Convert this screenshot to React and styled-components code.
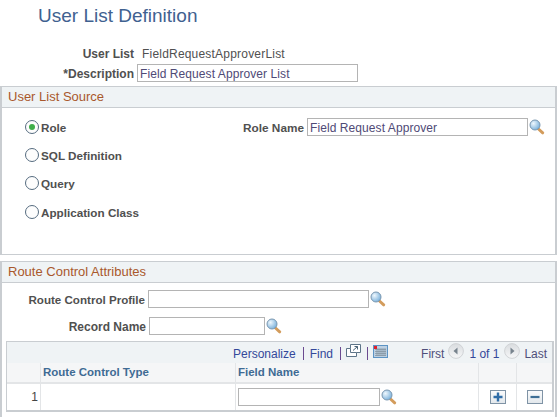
import React from 'react';
import styled, { createGlobalStyle } from 'styled-components';

const Global = createGlobalStyle`
  html, body {
    margin: 0;
    padding: 0;
    background: #fff;
  }
  body {
    font-family: "Liberation Sans", Arial, sans-serif;
    font-size: 12px;
    color: #444;
    overflow: hidden;
  }
`;

const Page = styled.div`
  width: 557px;
  height: 417px;
  overflow: hidden;
  padding-top: 6px;
  box-sizing: border-box;
`;

const Title = styled.h1`
  margin: 0 0 0 38px;
  height: 20px;
  line-height: 20px;
  font-size: 19px;
  font-weight: normal;
  color: #3f6190;
`;

const Form = styled.div`
  margin-top: 18px;
  display: grid;
  grid-template-columns: 134px auto;
  grid-auto-rows: 18px;
  row-gap: 2px;
  align-items: center;
`;

const Label = styled.label`
  padding-top: 1px;
  font-weight: bold;
  font-size: ${(p) => p.$size ?? 12}px;
  color: #505050;
  white-space: nowrap;
  text-align: right;
`;

const Value = styled.span`
  margin-left: 8px;
  padding-top: 1px;
  letter-spacing: 0.2px;
  color: #505050;
`;

const Input = styled.div`
  box-sizing: border-box;
  width: ${(p) => p.$w}px;
  height: 18px;
  margin-left: ${(p) => p.$ml ?? 3}px;
  padding-left: 2px;
  line-height: 18px;
  letter-spacing: 0.08px;
  border: 1px solid #b4b4b4;
  background: #fff;
  color: #4f4a76;
  white-space: nowrap;
  flex: none;
`;

const Section = styled.section`
  box-sizing: border-box;
  margin-top: ${(p) => p.$mt}px;
  width: 557px;
  height: ${(p) => p.$h}px;
  border: 1px solid #c9cdd1;
  border-width: 1px 2px 1px 2px;
`;

const SectionHead = styled.div`
  box-sizing: border-box;
  height: 21px;
  padding-left: 6px;
  line-height: 19px;
  background: #eff3f5;
  border-bottom: 1px solid #c9cdd1;
  color: #a9582c;
  font-size: 13px;
`;

const SourceBody = styled.div`
  display: flex;
  justify-content: space-between;
  padding: 10px 10px 0 23px;
`;

const RadioList = styled.div`
  display: flex;
  flex-direction: column;
  gap: 10px;
`;

const RadioRow = styled.div`
  display: flex;
  align-items: center;
  gap: 2px;
  height: 18px;
  margin-top: ${(p) => p.$mt ?? 0}px;
  font-weight: bold;
  font-size: 11.7px;
  color: #505050;
`;

const Radio = styled.span`
  box-sizing: border-box;
  width: 14px;
  height: 14px;
  border-radius: 50%;
  border: 1px solid #566c80;
  background: #fdfdfd;
  display: flex;
  align-items: center;
  justify-content: center;
  &::after {
    content: "";
    display: ${(p) => (p.$on ? 'block' : 'none')};
    width: 6px;
    height: 6px;
    border-radius: 50%;
    background: #3fae49;
  }
`;

const Row = styled.div`
  display: flex;
  align-items: center;
  height: 18px;
  margin-top: ${(p) => p.$mt ?? 0}px;
`;

const RouteLabel = styled(Label)`
  width: ${(p) => p.$w}px;
  flex: none;
`;

const RouteBody = styled.div`
  padding-top: 7px;
`;

const Grid = styled.div`
  box-sizing: border-box;
  margin: 6px 0 0 4px;
  width: 548px;
  height: 71px;
  border: 1px solid #c9cdd1;
  border-width: 1px 2px 2px 1px;
  display: grid;
  grid-template-columns: 33px 195px 243px 38px 1fr;
  grid-template-rows: 21px 21px 1fr;
`;

const GridBar = styled.div`
  grid-column: 1 / -1;
  display: flex;
  align-items: center;
  padding: 2px 0 0 226px;
  background: #eff3f5;
  color: #33489a;
`;

const BarLink = styled.span`
  color: ${(p) => p.$c ?? '#33489a'};
  margin-left: ${(p) => p.$ml ?? 0}px;
`;

const BarIcon = styled.span`
  display: flex;
  margin-left: ${(p) => p.$ml ?? 0}px;
  margin-top: -5px;
`;

const Pipe = styled.span`
  width: 1px;
  height: 13px;
  background: #6a4a90;
  margin: 0 ${(p) => p.$r ?? 6}px 0 ${(p) => p.$l ?? 7}px;
`;

const GridHead = styled.div`
  box-sizing: border-box;
  padding-left: 2px;
  line-height: 19px;
  background: #f5f6f7;
  border-left: ${(p) => (p.$first ? 0 : '1px solid #e3e5e7')};
  border-bottom: 2px solid #e3e5e7;
  font-weight: bold;
  font-size: 11.5px;
  color: #3f6b94;
`;

const GridCell = styled.div`
  box-sizing: border-box;
  display: flex;
  align-items: center;
  justify-content: ${(p) => p.$justify ?? 'flex-start'};
  padding-right: ${(p) => p.$pr ?? 0}px;
  border-left: ${(p) => (p.$first ? 0 : '1px solid #e3e5e7')};
`;

const IconButton = styled.span`
  box-sizing: border-box;
  width: 16px;
  height: 14px;
  background: linear-gradient(#fafbfc, #e3e8ec);
  border: 1px solid #7f93a5;
  display: flex;
  align-items: center;
  justify-content: center;
`;

const Magnifier = styled.svg`
  width: 16px;
  height: 16px;
  margin-left: 1px;
  flex: none;
`;

const Search = () => (
  <Magnifier viewBox="0 0 16 16">
    <defs>
      <radialGradient id="lens" cx="0.35" cy="0.35" r="0.8">
        <stop offset="0" stopColor="#eef7fd" />
        <stop offset="1" stopColor="#68a6d6" />
      </radialGradient>
    </defs>
    <path d="M9.5 10l4.2 3.8" stroke="#d39c5c" strokeWidth="3" strokeLinecap="round" />
    <circle cx="6" cy="6" r="5" fill="url(#lens)" stroke="#7a97b0" strokeWidth="1" />
  </Magnifier>
);

const Pager = ({ dir }) => (
  <svg width="16" height="16" viewBox="0 0 16 16">
    <defs>
      <linearGradient id="pagerFill" x1="0" y1="0" x2="0" y2="1">
        <stop offset="0" stopColor="#d9dcdf" />
        <stop offset="1" stopColor="#f6f7f8" />
      </linearGradient>
    </defs>
    <circle cx="8" cy="8" r="7.4" fill="url(#pagerFill)" stroke="#d0d3d6" />
    <path d={dir === 'left' ? 'M5.5 8L9.5 4.5v7z' : 'M10.5 8L6.5 4.5v7z'} fill="#77838d" />
  </svg>
);

const PopOut = () => (
  <svg width="15" height="14" viewBox="0 0 15 14" fill="none" stroke="#5d7488">
    <path d="M.5 4.5h4v-4h10v8h-4v4h-10z" fill="#fff" />
    <path d="M4.5 4.5v4h6" />
    <path d="M7 6.5l4.5-4M8.5 2.5h3v3" stroke="#4a6478" />
  </svg>
);

const Download = () => (
  <svg width="15" height="13" viewBox="0 0 15 13">
    <rect x=".5" y=".5" width="14" height="12" fill="#bcd0e2" stroke="#5b93c4" />
    <path d="M2 4.5h11M2 6.5h11M2 8.5h11M2 10.5h11M4 3v8M6 3v8M8 3v8M10 3v8M12 3v8" stroke="#7f8f9c" strokeWidth=".7" />
    <rect x="1" y="1" width="3" height="3" fill="#e0202a" />
  </svg>
);

const Plus = () => (
  <svg width="10" height="10" viewBox="0 0 10 10">
    <path d="M5 0.5v9M.5 5h9" stroke="#2f6da8" strokeWidth="2.4" />
  </svg>
);

const Minus = () => (
  <svg width="10" height="10" viewBox="0 0 10 10">
    <path d="M.5 5h9" stroke="#3f6f96" strokeWidth="2.2" />
  </svg>
);

const App = () => (
  <Page>
    <Global />
    <Title>User List Definition</Title>
    <Form>
      <Label>User List</Label>
      <Value>FieldRequestApproverList</Value>
      <Label>*Description</Label>
      <Input $w={221}>Field Request Approver List</Input>
    </Form>
    <Section $mt={4} $h={169}>
      <SectionHead>User List Source</SectionHead>
      <SourceBody>
        <RadioList>
          <RadioRow><Radio $on />Role</RadioRow>
          <RadioRow><Radio />SQL Definition</RadioRow>
          <RadioRow><Radio />Query</RadioRow>
          <RadioRow $mt={1}><Radio />Application Class</RadioRow>
        </RadioList>
        <Row>
          <Label $size={11.8}>Role Name</Label>
          <Input $w={221}>Field Request Approver</Input>
          <Search />
        </Row>
      </SourceBody>
    </Section>
    <Section $mt={6} $h={170}>
      <SectionHead>Route Control Attributes</SectionHead>
      <RouteBody>
        <Row>
          <RouteLabel $w={143} $size={11.6}>Route Control Profile</RouteLabel>
          <Input $w={221}></Input>
          <Search />
        </Row>
        <Row $mt={9}>
          <RouteLabel $w={144}>Record Name</RouteLabel>
          <Input $w={116}></Input>
          <Search />
        </Row>
        <Grid>
          <GridBar>
            <BarLink>Personalize</BarLink>
            <Pipe />
            <BarLink>Find</BarLink>
            <Pipe $r={5} />
            <BarIcon><PopOut /></BarIcon>
            <Pipe $l={6} $r={5} />
            <BarIcon><Download /></BarIcon>
            <BarLink $c="#4f4f7a" $ml={33}>First</BarLink>
            <BarIcon $ml={4}><Pager dir="left" /></BarIcon>
            <BarLink $ml={5}>1 of 1</BarLink>
            <BarIcon $ml={5}><Pager dir="right" /></BarIcon>
            <BarLink $c="#4f4f7a" $ml={4}>Last</BarLink>
          </GridBar>
          <GridHead $first />
          <GridHead>Route Control Type</GridHead>
          <GridHead>Field Name</GridHead>
          <GridHead />
          <GridHead />
          <GridCell $first $justify="flex-end" $pr={2}>1</GridCell>
          <GridCell />
          <GridCell>
            <Input $w={142} $ml={2}></Input>
            <Search />
          </GridCell>
          <GridCell $justify="center"><IconButton><Plus /></IconButton></GridCell>
          <GridCell $justify="center"><IconButton><Minus /></IconButton></GridCell>
        </Grid>
      </RouteBody>
    </Section>
  </Page>
);

export default App;
